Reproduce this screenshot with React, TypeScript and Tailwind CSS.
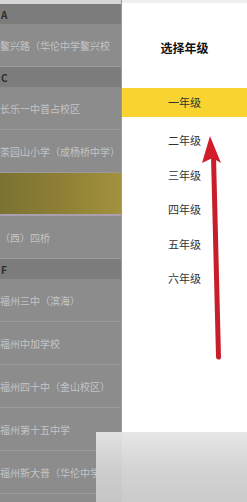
import React from 'react';

type Item = { kind: 'header' | 'row' | 'blur'; text?: string };

const schools: Item[] = [
  { kind: 'header', text: 'A' },
  { kind: 'row', text: '鳌兴路（华伦中学鳌兴校' },
  { kind: 'header', text: 'C' },
  { kind: 'row', text: '长乐一中首占校区' },
  { kind: 'row', text: '茶园山小学（成杨桥中学）' },
  { kind: 'blur' },
  { kind: 'row', text: '（西）四桥' },
  { kind: 'header', text: 'F' },
  { kind: 'row', text: '福州三中（滨海）' },
  { kind: 'row', text: '福州中加学校' },
  { kind: 'row', text: '福州四十中（金山校区）' },
  { kind: 'row', text: '福州第十五中学' },
  { kind: 'row', text: '福州新大普（华伦中学' },
];

const grades = ['一年级', '二年级', '三年级', '四年级', '五年级', '六年级'];

export default function App() {
  return (
    <div
      className="relative w-[247px] h-[502px] overflow-hidden flex bg-white"
      style={{ fontFamily: '"Noto Sans CJK SC", "Noto Sans", sans-serif' }}
    >
      {/* dimmed school list */}
      <div className="w-[122px] shrink-0 flex flex-col bg-[#8c8c8c] border-r border-[#9a9a9a]">
        <div className="h-[4px] bg-[#d6d6d6]" />
        {schools.map((s, i) => {
          if (s.kind === 'header')
            return (
              <div key={i} className="h-[20px] flex items-center px-[1px] bg-[#7c7c7c] text-[10px] font-bold text-[#2e2e2e]">
                {s.text}
              </div>
            );
          if (s.kind === 'blur')
            return (
              <div key={i} className="h-[43px] bg-gradient-to-r from-[#7b7232] via-[#8e7f35] to-[#a2923e] border-b-2 border-[#a99fb0]" />
            );
          return (
            <div
              key={i}
              className="h-[43px] flex items-center whitespace-nowrap overflow-hidden text-[10px] text-[#c4c4c4] border-b border-[#9c9c9c]"
            >
              {s.text}
            </div>
          );
        })}
      </div>

      {/* grade picker */}
      <div className="flex-1 flex flex-col border-t-[3px] border-[#eeeeee]">
        <div className="h-[85px] pt-[4px] flex items-center justify-center text-[12px] font-semibold text-[#111]">
          选择年级
        </div>
        {grades.map((g, i) => (
          <div
            key={g}
            className={
              i === 0
                ? 'h-[29px] mb-[6px] flex items-center justify-center bg-[#f9d330] text-[11px] text-[#333]'
                : 'h-[34.5px] flex items-center justify-center text-[11px] text-[#333]'
            }
          >
            {g}
          </div>
        ))}
      </div>

      {/* red arrow annotation */}
      <svg className="absolute left-0 top-0" width="247" height="502" viewBox="0 0 247 502">
        <path d="M213.5 156 L218.5 357" stroke="#c81d2a" strokeWidth="5" strokeLinecap="round" fill="none" />
        <path d="M210 136 L221 163 L212.5 158 L202 163 Z" fill="#d21e2c" />
      </svg>

      {/* watermark */}
      <div className="absolute left-[96px] top-[432px] w-[151px] h-[70px] bg-gradient-to-b from-[#e6e6e6] via-[#d2d2d2] to-[#c8c8c8] opacity-95" />
    </div>
  );
}
